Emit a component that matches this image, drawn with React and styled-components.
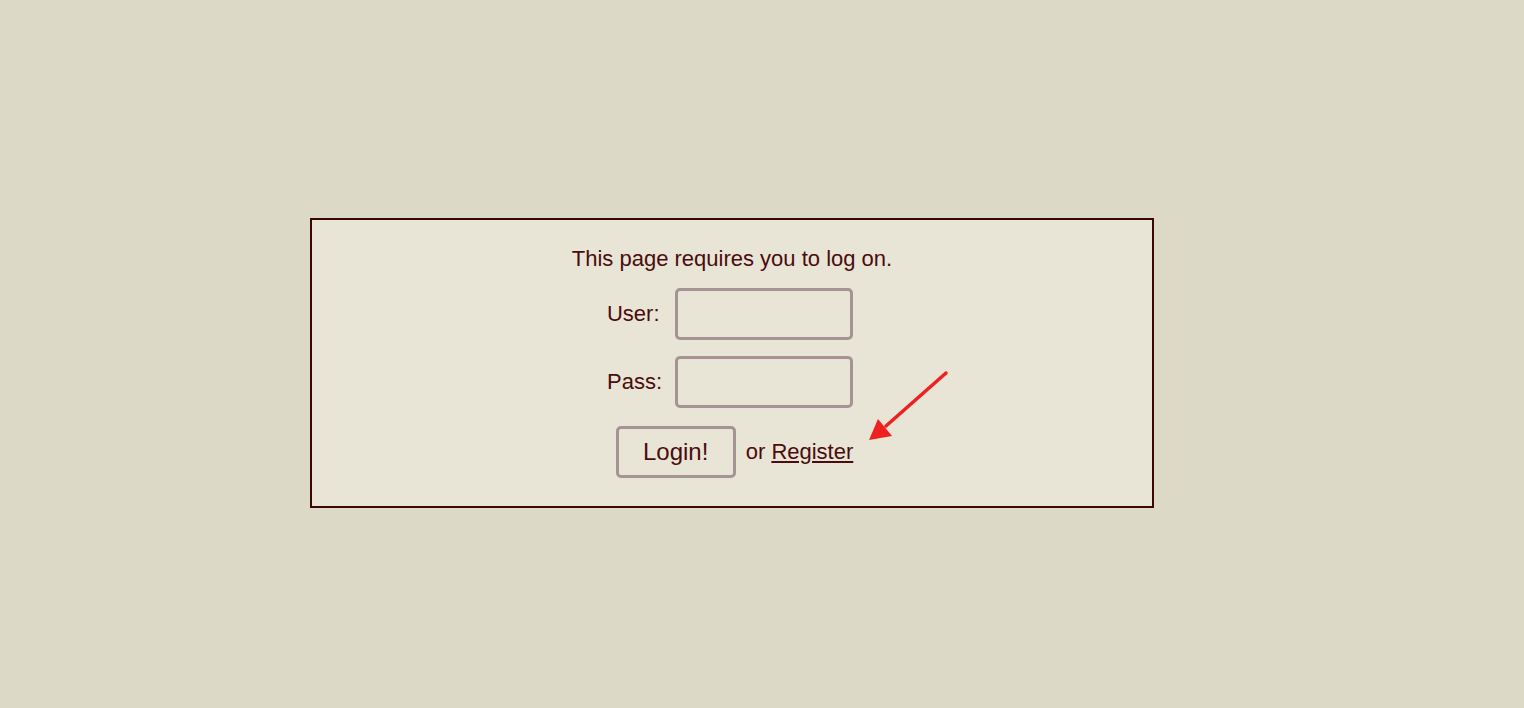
import React from "react";
import styled, { createGlobalStyle } from "styled-components";

const GlobalStyle = createGlobalStyle`
  body {
    margin: 0;
    background: #dcd9c6;
    font-family: "Liberation Sans", Arial, sans-serif;
    color: #4a0c0c;
  }
`;

const Page = styled.div`
  padding: 218px 0 0 310px;
  min-height: 708px;
  box-sizing: border-box;
`;

const Box = styled.div`
  position: relative;
  width: 844px;
  height: 290px;
  box-sizing: border-box;
  border: 2px solid #3a0606;
  background: #e8e5d7;
  padding-top: 26px;
  display: flex;
  flex-direction: column;
  align-items: center;
`;

const Notice = styled.p`
  margin: 0 0 16px;
  font-size: 22px;
  line-height: 26px;
`;

const Fields = styled.div`
  display: grid;
  grid-template-columns: auto 178px;
  column-gap: 13px;
  row-gap: 16px;
  align-items: center;
  margin-left: -4px;
`;

const Label = styled.label`
  font-size: 22px;
  text-align: left;
`;

const Input = styled.input`
  width: 178px;
  height: 52px;
  margin: 0;
  box-sizing: border-box;
  border: 3px solid #a69494;
  border-radius: 5px;
  background: #e8e5d7;
  outline: none;
`;

const Actions = styled.div`
  display: flex;
  align-items: center;
  gap: 10px;
  margin-top: 18px;
  margin-left: 5px;
  font-size: 22px;
`;

const Button = styled.button`
  width: 120px;
  height: 52px;
  box-sizing: border-box;
  border: 3px solid #a69494;
  border-radius: 5px;
  background: #e8e5d7;
  color: #4a0c0c;
  font-family: "Liberation Sans", Arial, sans-serif;
  font-size: 24px;
`;

const Link = styled.a`
  color: #4a0c0c;
  text-decoration: underline;
`;

const Arrow = styled.svg`
  position: absolute;
  left: 553px;
  top: 147px;
  width: 90px;
  height: 80px;
  overflow: visible;
`;

const App = () => {
  return (
    <Page>
      <GlobalStyle />
      <Box>
        <Notice>This page requires you to log on.</Notice>
        <Fields>
          <Label>User:</Label>
          <Input type="text" />
          <Label>Pass:</Label>
          <Input type="password" />
        </Fields>
        <Actions>
          <Button>Login!</Button>
          <span>
            or <Link href="#">Register</Link>
          </span>
        </Actions>
        <Arrow viewBox="0 0 90 80">
          <line x1="81" y1="6" x2="21" y2="59" stroke="#ee2020" strokeWidth="3.5" strokeLinecap="round" />
          <polygon points="4,73 27,69 13,52" fill="#ee2020" />
        </Arrow>
      </Box>
    </Page>
  );
};

export default App;
